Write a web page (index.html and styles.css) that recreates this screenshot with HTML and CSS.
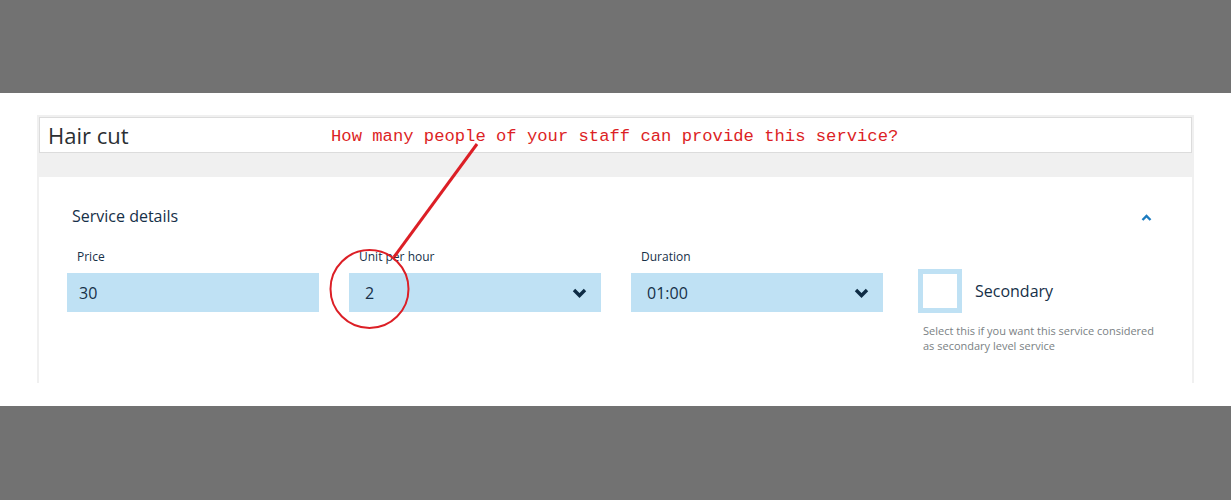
FILE: index.html
```html
<!DOCTYPE html>
<html lang="en">
<head>
    <meta charset="UTF-8">
    <meta name="viewport" content="width=device-width, initial-scale=1.0">
    <title>Hair cut - Service details</title>
    <link rel="stylesheet" href="styles.css">
</head>
<body>
    <div class="top-bar"></div>

    <div class="stage">
        <div class="panel">
            <div class="panel-header">Hair cut</div>
            <div class="panel-band"></div>

            <div class="panel-body">
                <div class="section-title">
                    <span>Service details</span>
                    <svg class="chevron-up" width="11" height="7" viewBox="0 0 11 7">
                        <polyline points="1.5,6 5.5,2 9.5,6" fill="none" stroke="#1b7bbf" stroke-width="2.4"/>
                    </svg>
                </div>

                <div class="fields">
                    <div class="field">
                        <label>Price</label>
                        <div class="control">30</div>
                    </div>

                    <div class="field">
                        <label>Unit per hour</label>
                        <div class="control select">
                            <span>2</span>
                            <svg width="15" height="10" viewBox="0 0 15 10">
                                <polyline points="2,2 7.5,7.5 13,2" fill="none" stroke="#0e2c45" stroke-width="3.4"/>
                            </svg>
                        </div>
                    </div>

                    <div class="field">
                        <label>Duration</label>
                        <div class="control select">
                            <span>01:00</span>
                            <svg width="15" height="10" viewBox="0 0 15 10">
                                <polyline points="2,2 7.5,7.5 13,2" fill="none" stroke="#0e2c45" stroke-width="3.4"/>
                            </svg>
                        </div>
                    </div>

                    <div class="secondary">
                        <div class="check-row">
                            <div class="checkbox"></div>
                            <span class="check-label">Secondary</span>
                        </div>
                        <p class="help">Select this if you want this service considered<br>as secondary level service</p>
                    </div>
                </div>
            </div>
        </div>

        <!-- annotation drawn over the screenshot -->
        <div class="note">How many people of your staff can provide this service?</div>
        <svg class="note-marks" width="1231" height="313" viewBox="0 93 1231 313">
            <line x1="477" y1="144" x2="394" y2="257" stroke="#dc1f26" stroke-width="3"/>
            <ellipse cx="369.5" cy="289" rx="39" ry="39" fill="none" stroke="#dc1f26" stroke-width="2"/>
        </svg>
    </div>
</body>
</html>
```

FILE: styles.css
```css
body {
    margin: 0;
    background-color: #727272;
    font-family: "Open Sans", "Noto Sans", Arial, sans-serif;
    color: #1d3650;
}

.top-bar {
    height: 93px;
}

.stage {
    position: relative;
    height: 313px;
    background: #ffffff;
    padding: 22px 0 0 37px;
    box-sizing: border-box;
}

.panel {
    width: 1157px;
    height: 268px;
    border: 2px solid #f0f0f0;
    border-bottom: none;
    box-sizing: border-box;
}

.panel-header {
    height: 36px;
    line-height: 34px;
    border: 1px solid #dcdcdc;
    box-sizing: border-box;
    padding-left: 8px;
    font-size: 22px;
    color: #2b2f33;
}

.panel-band {
    height: 24px;
    background: #f0f0f0;
}

.panel-body {
    padding: 28px 40px 0 28px;
}

.section-title {
    display: flex;
    justify-content: space-between;
    align-items: center;
    margin-left: 5px;
    font-size: 16px;
    line-height: 22px;
    color: #163048;
}

.chevron-up {
    margin-top: 2px;
}

.fields {
    display: flex;
    align-items: flex-start;
    margin-top: 22px;
}

.field {
    flex-shrink: 0;
    width: 252px;
    margin-right: 30px;
}

.field label {
    display: block;
    font-size: 12px;
    line-height: 16px;
    padding-left: 10px;
    margin-bottom: 8px;
    color: #163048;
}

.control {
    height: 39px;
    background: #bfe1f4;
    display: flex;
    align-items: center;
    padding: 0 14px 0 12px;
    font-size: 16px;
    line-height: 20px;
    color: #163048;
}

.select {
    justify-content: space-between;
    padding-left: 16px;
}

.secondary {
    margin-top: 20px;
    margin-left: 5px;
    white-space: nowrap;
}

.check-row {
    display: flex;
    align-items: center;
}

.checkbox {
    width: 44px;
    height: 44px;
    border: 5px solid #bfe1f4;
    box-sizing: border-box;
    background: #ffffff;
}

.check-label {
    margin-left: 13px;
    font-size: 16px;
    color: #163048;
}

.help {
    margin: 10px 0 0 5px;
    font-size: 11px;
    line-height: 15px;
    color: #7a7f84;
}

.note {
    position: absolute;
    left: 331px;
    top: 33px;
    font-family: "Liberation Mono", "Courier New", monospace;
    font-size: 17.2px;
    line-height: 22px;
    color: #dc1f26;
    white-space: nowrap;
}

.note-marks {
    position: absolute;
    left: 0;
    top: 0;
    pointer-events: none;
}
```
